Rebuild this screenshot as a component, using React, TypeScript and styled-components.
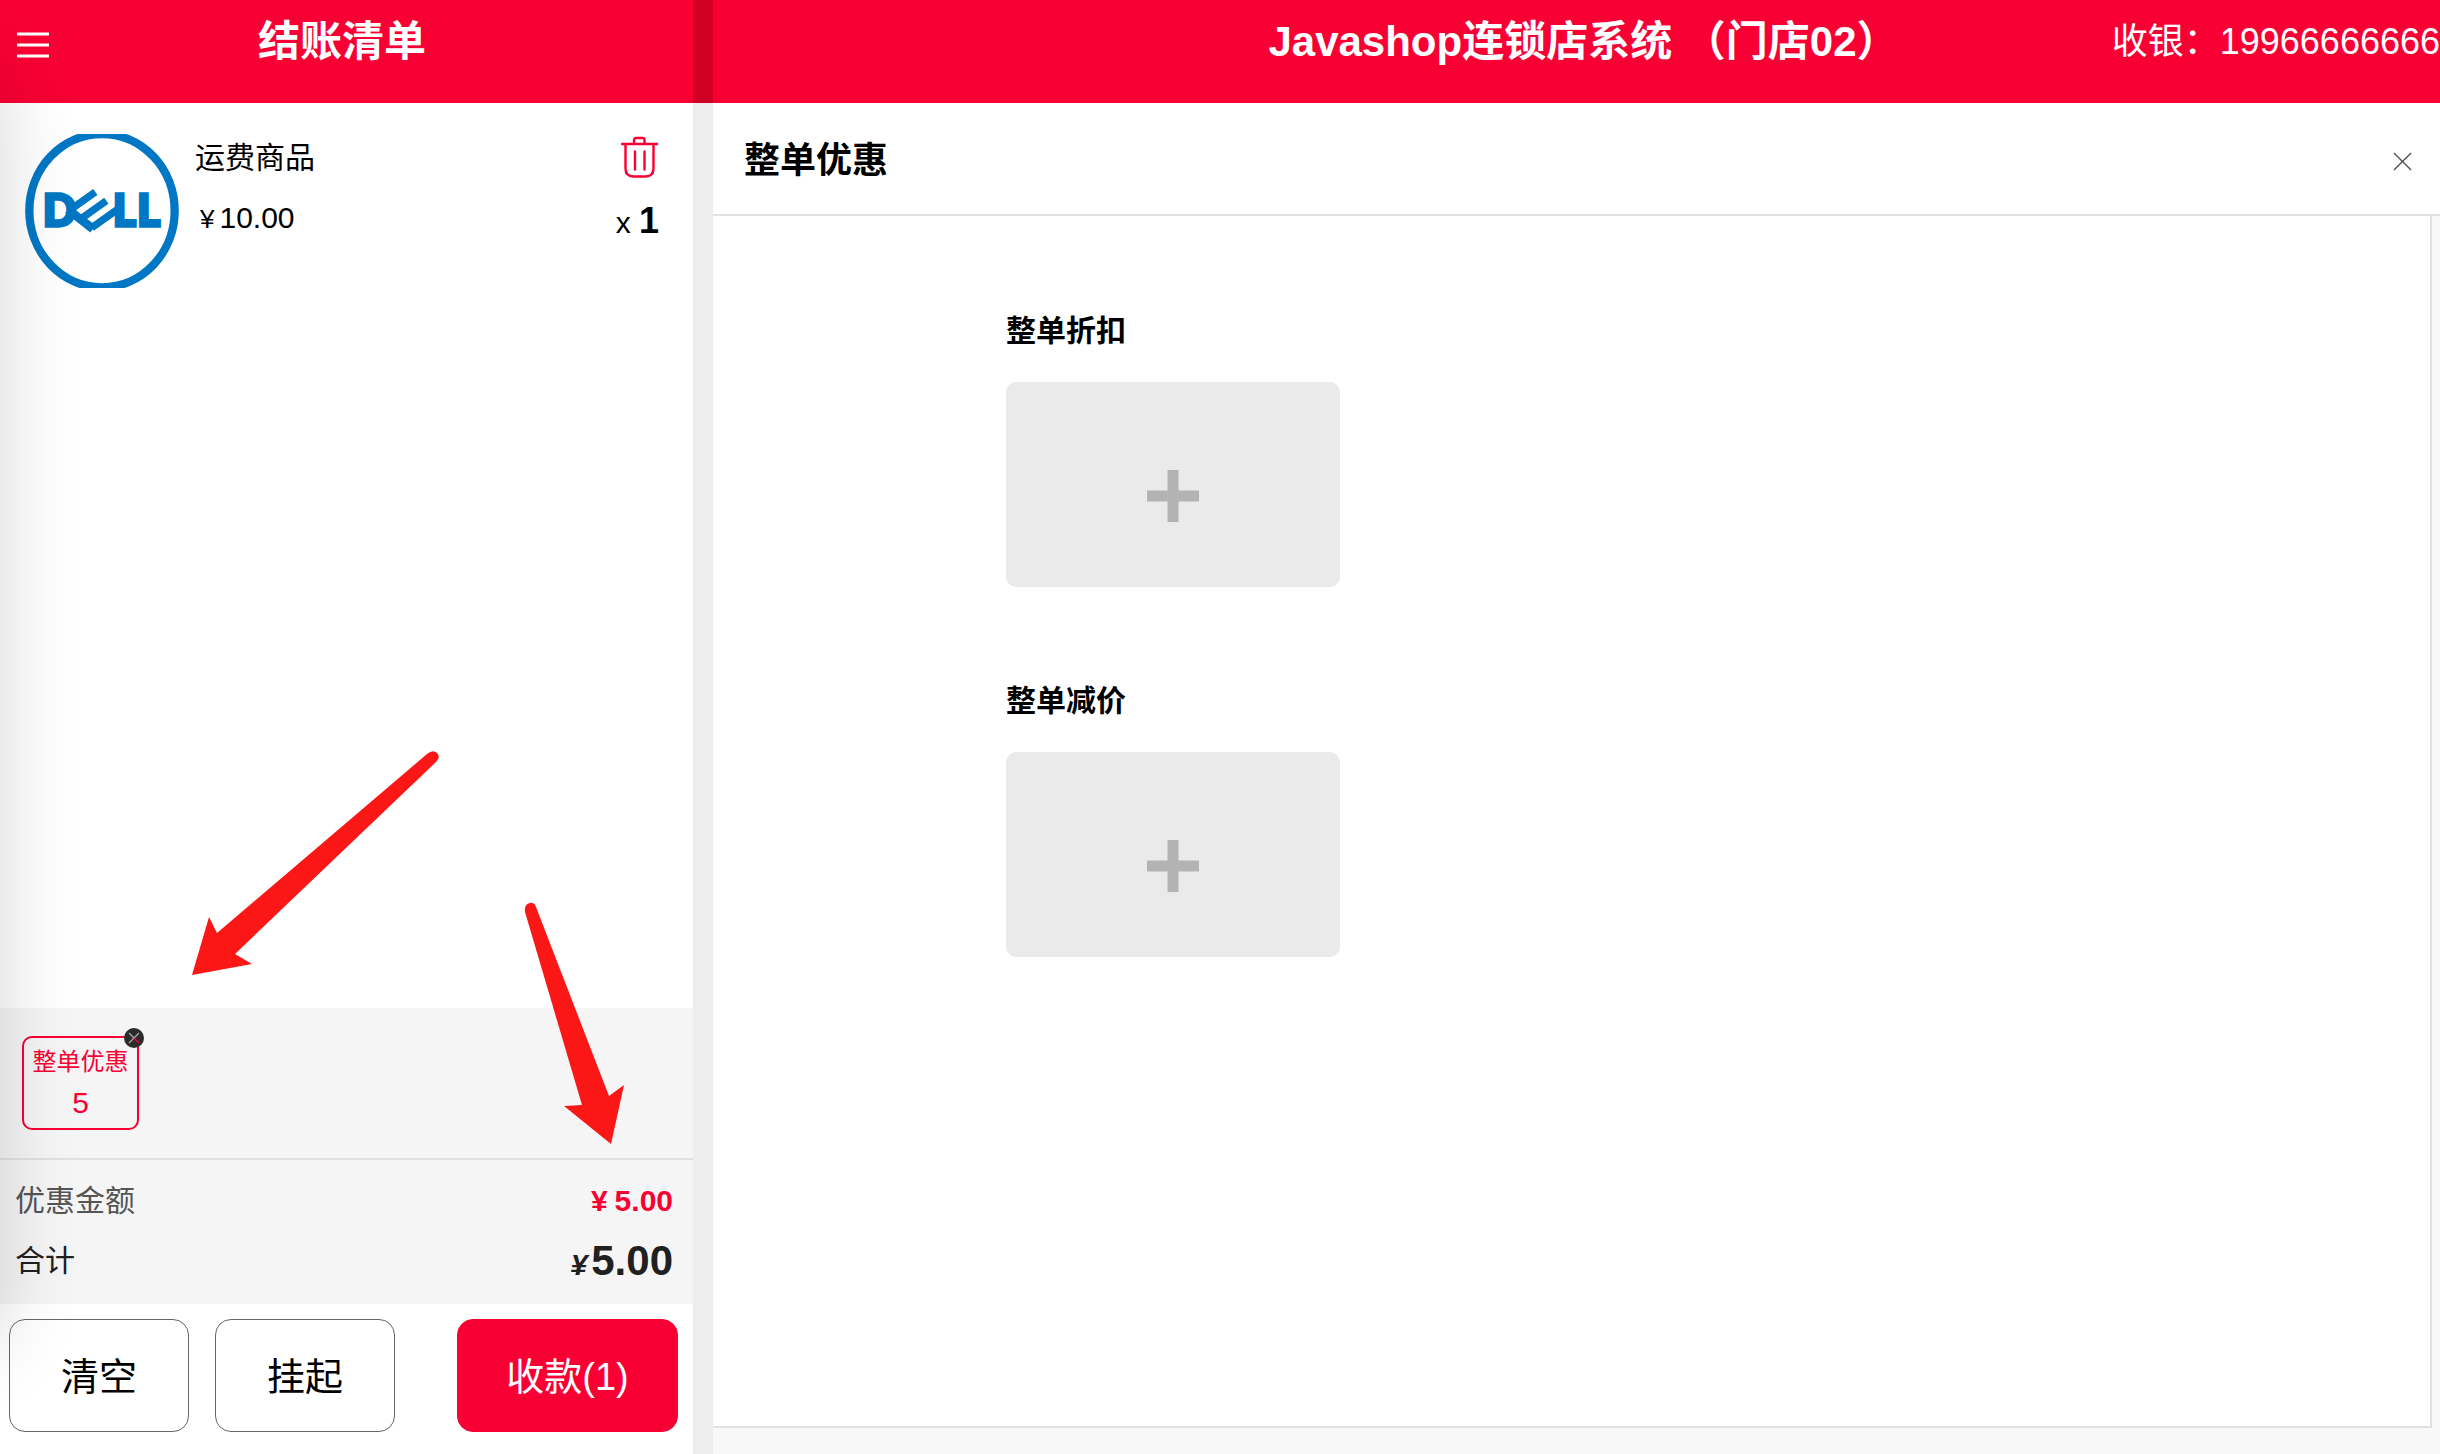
import React from 'react';
import styled, { createGlobalStyle } from 'styled-components';

const RED = '#f80034';

const GlobalStyle = createGlobalStyle`
  *, *::before, *::after { box-sizing: border-box; }
  body {
    margin: 0;
    background: #f8f8f8;
    color: #000;
    font-family: "Liberation Sans", "Noto Sans CJK SC", sans-serif;
    font-size: 30px;
  }
  h1, h2, h3, p, dl, dt, dd, ul { margin: 0; padding: 0; list-style: none; }
  button {
    margin: 0;
    padding: 0;
    border: 0;
    background: none;
    color: inherit;
    font: inherit;
    cursor: pointer;
  }
  svg { display: block; }
`;

const Page = styled.div`
  position: relative;
  display: flex;
  min-height: 100vh;
  overflow: hidden;

  /* soft shade along the left window edge */
  &::after {
    content: '';
    position: absolute;
    left: -200px;
    top: 70px;
    bottom: 110px;
    width: 200px;
    box-shadow: 0 0 80px rgba(0, 0, 0, 0.16);
    pointer-events: none;
  }
`;

const Sidebar = styled.aside`
  flex: 0 0 693px;
  display: flex;
  flex-direction: column;
  background: #fff;
`;

const Gutter = styled.div`
  flex: 0 0 20px;
  background: linear-gradient(#cf0022 103px, #ededed 103px);
`;

const Main = styled.main`
  flex: 1;
  min-width: 0;
  display: flex;
  flex-direction: column;
`;

const TopBar = styled.header<{ $columns: string; $left: number }>`
  display: grid;
  grid-template-columns: ${(p) => p.$columns};
  align-items: center;
  height: 103px;
  padding: 0 0 20px ${(p) => p.$left}px;
  background: ${RED};
  color: #fff;
  white-space: nowrap;
`;

const BarTitle = styled.h1`
  font-size: 42px;
  line-height: 60px;
  font-weight: 700;
  text-align: center;
`;

const MenuButton = styled.button`
  justify-self: start;
  padding-top: 6px;
`;

const Cashier = styled.p`
  justify-self: end;
  font-size: 36px;
  line-height: 60px;
`;

const ItemList = styled.ul`
  flex: 1;
`;

const Item = styled.li`
  display: flex;
  gap: 16px;
  padding: 31px 34px 0 25px;
`;

const ItemInfo = styled.div`
  flex: 1;
`;

const ItemName = styled.h3`
  font-size: 30px;
  line-height: 48px;
  font-weight: 400;
`;

const ItemPrice = styled.p`
  padding-top: 12px;
  line-height: 48px;
`;

const ItemSide = styled.div`
  display: flex;
  flex-direction: column;
  align-items: flex-end;
`;

const RemoveButton = styled.button`
  height: 46px;
`;

const Quantity = styled.p`
  padding-top: 17px;
  line-height: 48px;

  strong { font-size: 36px; }
`;

const Currency = styled.span<{ $size: number; $pad: number }>`
  font-size: ${(p) => p.$size}px;
  padding: 0 ${(p) => p.$pad}px;
`;

const Discounts = styled.section`
  display: flex;
  height: 152px;
  padding: 28px 22px;
  background: #f5f5f5;
  border-bottom: 2px solid #e1e1e1;
`;

const DiscountTag = styled.div`
  position: relative;
  display: flex;
  flex-direction: column;
  align-items: center;
  width: 117px;
  height: 94px;
  padding-top: 6px;
  border: 2px solid ${RED};
  border-radius: 10px;
  color: ${RED};
  font-size: 24px;
  line-height: 36px;
  white-space: nowrap;
`;

const DiscountValue = styled.span`
  padding-top: 5px;
  font-size: 30px;
`;

const TagClose = styled.button`
  position: absolute;
  top: -10px;
  right: -7px;
`;

const Summary = styled.dl`
  padding: 11px 20px 9px 15px;
  background: #f5f5f5;
`;

const SummaryRow = styled.div<{ $color: string }>`
  display: flex;
  justify-content: space-between;
  color: ${(p) => p.$color};
  line-height: 60px;
`;

const Amount = styled.dd<{ $size: number; $color: string }>`
  color: ${(p) => p.$color};
  font-size: ${(p) => p.$size}px;
  font-weight: 700;

  em {
    padding-right: 4px;
    font-size: 30px;
  }
`;

const Actions = styled.footer`
  display: flex;
  gap: 26px;
  padding: 15px 15px 22px 9px;
`;

const ActionButton = styled.button<{ $primary?: boolean }>`
  width: ${(p) => (p.$primary ? 221 : 180)}px;
  height: 113px;
  margin-left: ${(p) => (p.$primary ? 'auto' : 0)};
  padding-bottom: 5px;
  border: 1px solid ${(p) => (p.$primary ? RED : '#666')};
  border-radius: 16px;
  background: ${(p) => (p.$primary ? RED : 'transparent')};
  color: ${(p) => (p.$primary ? '#fff' : '#000')};
  font-size: 38px;
`;

const PanelHead = styled.div`
  display: flex;
  align-items: center;
  justify-content: space-between;
  height: 113px;
  padding: 5px 28px 0 31px;
  background: #fff;
  border-bottom: 2px solid #e1e1e1;
`;

const PanelTitle = styled.h2`
  font-size: 36px;
  line-height: 60px;
`;

const PanelBody = styled.div`
  flex: 1;
  display: flex;
  flex-direction: column;
  gap: 90px;
  margin: 0 8px 26px 0;
  padding: 91px 40px 80px 293px;
  background: #fff;
  border: solid #e1e1e1;
  border-width: 0 2px 2px 0;
`;

const Group = styled.section`
  display: flex;
  flex-direction: column;
  align-items: flex-start;
  gap: 27px;
`;

const GroupTitle = styled.h3`
  font-size: 30px;
  line-height: 48px;
`;

const AddCard = styled.button`
  display: flex;
  align-items: center;
  justify-content: center;
  width: 334px;
  height: 205px;
  padding-top: 23px;
  border-radius: 10px;
  background: #eaeaea;
`;

const Markup = styled.svg`
  position: absolute;
  left: 0;
  bottom: 0;
  fill: #fc1717;
  pointer-events: none;
`;

function MenuIcon() {
  return (
    <svg width="32" height="26" viewBox="0 0 32 26" stroke="#fff" strokeWidth="3">
      <path d="M0 2h32M0 13h32M0 24h32" />
    </svg>
  );
}

function TrashIcon() {
  return (
    <svg width="38" height="42" viewBox="0 0 38 42" fill="none" stroke={RED} strokeWidth="2.400" strokeLinecap="round" strokeLinejoin="round">
      <path d="M1 8h35M13 8V4q0-2 2-2h6.500q2 0 2 2v4" />
      <path d="M4.500 8v24.500q0 8 8 8h12q8 0 8-8V8M14 15.500v18M23.500 15.500v18" />
    </svg>
  );
}

function DellLogo() {
  return (
    <svg width="154" height="154" viewBox="0 0 462 462" role="img" aria-label="DELL" fontFamily="Lato, sans-serif" fontWeight="900">
      <rect width="462" height="462" fill="#fff" />
      <ellipse cx="231" cy="230" rx="218" ry="230" fill="none" stroke="#0077c4" strokeWidth="25" />
      <g fill="#0077c4" stroke="#0077c4" strokeWidth="10">
        <text x="54" y="276" fontSize="130">D</text>
        <text x="264" y="276" fontSize="130">L</text>
        <text x="337" y="276" fontSize="130">L</text>
      </g>
      {/* tilted slatted emblem in the middle of the mark */}
      <g fill="none" stroke="#0077c4" strokeWidth="22">
        <path d="M129 226L204 285" strokeWidth="26" />
        <path d="M134 229L211 174" />
        <path d="M167 255L244 200" />
        <path d="M200 281L276 227" />
      </g>
    </svg>
  );
}

function CrossIcon({ size, color }: { size: number; color: string }) {
  return (
    <svg width={size} height={size} viewBox="0 0 20 20" stroke={color} strokeWidth="1.500">
      <path d="M1 1l18 18M19 1L1 19" />
    </svg>
  );
}

function BadgeIcon() {
  return (
    <svg width="20" height="20" viewBox="0 0 20 20">
      <circle cx="10" cy="10" r="10" fill="#2b2b2b" />
      <path d="M15 5L5 15M5 5l5 5" stroke="#aaa" strokeWidth="1.300" />
      <path d="M10 10l5 5" stroke={RED} strokeWidth="1.300" />
    </svg>
  );
}

function PlusIcon() {
  return (
    <svg width="52" height="52" viewBox="0 0 52 52" stroke="#b3b3b3" strokeWidth="11">
      <path d="M26 0v52M0 26h52" />
    </svg>
  );
}

const groups = ['整单折扣', '整单减价'];

export default function App() {
  return (
    <>
      <GlobalStyle />
      <Page>
        <Sidebar>
          <TopBar $columns="32px 1fr 58px" $left={17}>
            <MenuButton aria-label="菜单"><MenuIcon /></MenuButton>
            <BarTitle>结账清单</BarTitle>
          </TopBar>
          <ItemList>
            <Item>
              <DellLogo />
              <ItemInfo>
                <ItemName>运费商品</ItemName>
                <ItemPrice><Currency $size={26} $pad={5}>¥</Currency>10.00</ItemPrice>
              </ItemInfo>
              <ItemSide>
                <RemoveButton aria-label="删除"><TrashIcon /></RemoveButton>
                <Quantity>x <strong>1</strong></Quantity>
              </ItemSide>
            </Item>
          </ItemList>
          <Discounts>
            <DiscountTag>
              整单优惠
              <DiscountValue>5</DiscountValue>
              <TagClose aria-label="移除优惠"><BadgeIcon /></TagClose>
            </DiscountTag>
          </Discounts>
          <Summary>
            <SummaryRow $color="#555">
              <dt>优惠金额</dt>
              <Amount $size={30} $color={RED}><Currency $size={30} $pad={7}>¥</Currency>5.00</Amount>
            </SummaryRow>
            <SummaryRow $color="#202020">
              <dt>合计</dt>
              <Amount $size={42} $color="#202020"><em>¥</em>5.00</Amount>
            </SummaryRow>
          </Summary>
          <Actions>
            <ActionButton>清空</ActionButton>
            <ActionButton>挂起</ActionButton>
            <ActionButton $primary>收款(1)</ActionButton>
          </Actions>
        </Sidebar>
        <Gutter />
        <Main>
          <TopBar $columns="1fr auto 1fr" $left={14}>
            <span />
            <BarTitle>Javashop连锁店系统 （门店02）</BarTitle>
            <Cashier>收银：19966666666</Cashier>
          </TopBar>
          <PanelHead>
            <PanelTitle>整单优惠</PanelTitle>
            <button aria-label="关闭"><CrossIcon size={19} color="#555" /></button>
          </PanelHead>
          <PanelBody>
            {groups.map((name) => (
              <Group key={name}>
                <GroupTitle>{name}</GroupTitle>
                <AddCard aria-label={name}><PlusIcon /></AddCard>
              </Group>
            ))}
          </PanelBody>
        </Main>
        <Markup width="693" height="754" viewBox="0 700 693 754" aria-hidden="true">
          <path d="M192 975L209 917L217 933L427 754Q433 749 437 753Q441 757 436 762L235 954L252 964Z" />
          <path d="M611 1144L564 1106L582 1105L525 912Q524 904 530 903Q534 902 536 907L609 1096L624 1085Z" />
        </Markup>
      </Page>
    </>
  );
}
